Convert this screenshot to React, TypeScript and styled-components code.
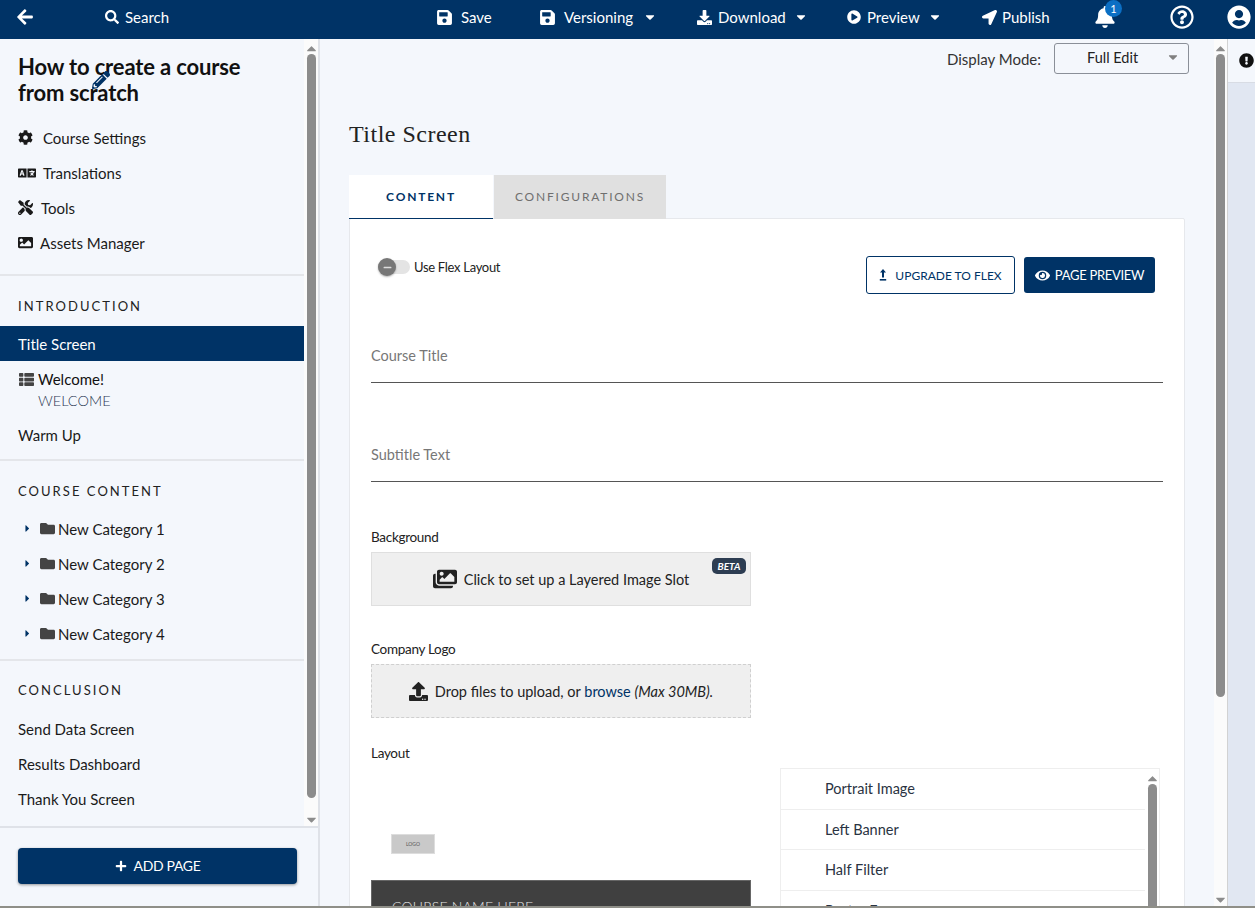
import React from "react";
import styled, { createGlobalStyle } from "styled-components";
import {
  FaArrowLeft, FaSearch, FaSave, FaCaretDown, FaDownload, FaPlayCircle, FaLocationArrow, FaBell,
  FaRegQuestionCircle, FaUserCircle, FaExclamationCircle, FaCog, FaLanguage, FaTools, FaImage,
  FaPencilAlt, FaThList, FaFolder, FaCaretRight, FaPlus, FaEye, FaImages, FaUpload, FaMinus,
  FaCaretUp,
} from "react-icons/fa";

const navy = "#003366";

const Global = createGlobalStyle`
  html, body { margin: 0; padding: 0; height: 100%; overflow: hidden; background: #f4f7fc; }
  body { font-family: Lato, "Liberation Sans", sans-serif; color: #1a1a1a; }
  * { box-sizing: border-box; }
`;

const Page = styled.div`
  width: 1255px; height: 908px; display: flex; flex-direction: column; overflow: hidden;
`;
const TopBar = styled.header`
  height: 39px; flex: none; background: ${navy}; color: #fff; display: flex; align-items: center;
  position: relative; font-size: 15px; padding-bottom: 5px;
`;
const BarItem = styled.div<{ $w: number; $gap?: number }>`
  flex: none; width: ${(p) => p.$w}px; display: flex; align-items: center; gap: ${(p) => p.$gap ?? 8}px;
  svg { flex: none; }
`;
const Caret = styled(FaCaretDown)`
  margin-left: 2px;
`;
const BellWrap = styled.div`
  position: relative; width: 76px; flex: none; height: 24px; display: flex; align-items: center;
`;
const Badge = styled.span`
  position: absolute; left: 11px; top: -5px; width: 17px; height: 17px; border-radius: 50%;
  background: #0b6fc4; color: #fff; font-size: 11px; display: flex; align-items: center; justify-content: center;
`;
const Body = styled.div`
  flex: 1; min-height: 0; display: flex;
`;
const BottomLine = styled.div`
  height: 2px; flex: none; background: #8f8f88;
`;
const Sidebar = styled.aside`
  width: 320px; flex: none; display: flex; flex-direction: column; border-right: 2px solid #dfe2e8;
`;
const SideScroll = styled.div`
  height: 787px; flex: none; display: flex; overflow: hidden;
`;
const SideContent = styled.div`
  width: 304px; flex: none; height: 100%; overflow: hidden;
`;
const Track = styled.div<{ $w: number; $pad: number }>`
  width: ${(p) => p.$w}px; flex: none; height: 100%; display: flex; flex-direction: column; align-items: center;
  color: #8c8c8c; background: #fbfbfb; padding: 3px 0 0; font-size: 15px;
`;
const Arrow = styled.div`
  height: 12px; flex: none; display: flex; align-items: center; justify-content: center; overflow: hidden;
`;
const Thumb = styled.div<{ $h: number; $gapTop: number }>`
  width: 9px; height: ${(p) => p.$h}px; flex: none; margin-top: ${(p) => p.$gapTop}px; margin-bottom: auto;
  background: #8c8c8c; border-radius: 5px;
`;
const CourseHead = styled.div`
  position: relative; padding: 15px 18px 0 18px;
`;
const CourseTitle = styled.h1`
  margin: 0; font-size: 22px; line-height: 26px; font-weight: 700; color: #111; letter-spacing: -0.15px;
`;
const Pencil = styled(FaPencilAlt)`
  position: absolute; left: 92px; top: 32px; color: ${navy}; width: 18px; height: 18px;
`;
const ToolList = styled.nav`
  padding: 14px 0 14px; border-bottom: 2px solid #e4e6ea;
`;
const ToolRow = styled.div<{ $gap: number }>`
  height: 35px; padding-left: 18px; display: flex; align-items: center; gap: ${(p) => p.$gap}px; font-size: 15px; color: #1a1a1a;
`;
const Section = styled.section<{ $last?: boolean }>`
  border-bottom: ${(p) => (p.$last ? "none" : "2px solid #e4e6ea")};
`;
const SectionTitle = styled.div<{ $top: number; $bottom: number }>`
  padding: ${(p) => p.$top}px 18px ${(p) => p.$bottom}px; font-size: 13px; line-height: 16px; letter-spacing: 2.05px; color: #222;
`;
const PageRow = styled.div<{ $active?: boolean }>`
  height: 35px; padding-left: 18px; display: flex; align-items: center; font-size: 15px;
  background: ${(p) => (p.$active ? navy : "transparent")}; color: ${(p) => (p.$active ? "#fff" : "#1a1a1a")};
`;
const WelcomeBlock = styled.div`
  padding: 8px 0 6px 19px; font-size: 15px; line-height: 21px;
`;
const WelcomeLine = styled.div`
  display: flex; align-items: center; gap: 4px; color: #111;
  svg { color: #444; }
`;
const WelcomeSub = styled.div`
  padding-left: 19px; font-weight: 300; color: #2d3a55; font-size: 14.5px;
`;
const CategoryRow = styled.div`
  height: 35px; padding-left: 22px; display: flex; align-items: center; font-size: 15px; color: #1a1a1a;
  svg:first-child { color: ${navy}; margin-right: 7px; }
  svg:nth-child(2) { color: #444; margin-right: 3px; }
`;
const SideFoot = styled.div`
  flex: 1; border-top: 2px solid #dfe2e8; padding: 20px 21px 0 18px;
`;
const AddButton = styled.button`
  width: 279px; height: 36px; border: none; border-radius: 4px; background: ${navy}; color: #fff;
  font: 14px Lato, sans-serif; letter-spacing: -0.35px; display: flex; align-items: center; justify-content: center; gap: 7px;
  box-shadow: 0 1px 3px rgba(0, 0, 0, 0.4); padding: 0 0 1px;
`;
const MainWrap = styled.main`
  width: 907px; flex: none; display: flex;
`;
const MainScroll = styled.div`
  width: 894px; flex: none; height: 100%; overflow: hidden; padding: 0 29px;
`;
const ModeRow = styled.div`
  display: flex; justify-content: flex-end; align-items: center; gap: 13px; padding: 4px 0 0; margin-right: -4px;
  font-size: 15px; color: #333;
`;
const ModeSelect = styled.div`
  width: 135px; height: 31px; border: 1px solid #8a8f98; border-radius: 3px; display: flex; align-items: center;
  justify-content: space-between; padding: 0 8px 3px 32px; color: #222; font-size: 14.5px;
  svg { color: #808080; }
`;
const Heading = styled.h2`
  margin: 44px 0 0; height: 57px; font: 400 24px/32px "Liberation Serif", "DejaVu Serif", serif; color: #222; letter-spacing: 0.5px;
`;
const Tabs = styled.div`
  display: flex; height: 44px;
`;
const Tab = styled.div<{ $active?: boolean }>`
  width: ${(p) => (p.$active ? 144 : 172)}px; display: flex; align-items: center; justify-content: center;
  font-size: 12px; letter-spacing: 1.8px; font-weight: ${(p) => (p.$active ? 700 : 400)};
  background: ${(p) => (p.$active ? "#fff" : "#e0e0e0")}; color: ${(p) => (p.$active ? navy : "#6f6f6f")};
  border-bottom: ${(p) => (p.$active ? `1px solid ${navy}` : "1px solid #e0e0e0")};
  margin-right: ${(p) => (p.$active ? 1 : 0)}px;
`;
const Card = styled.div`
  width: 836px; background: #fff; border: 1px solid #e6e8ec; border-radius: 2px; margin-top: -1px; padding: 0 21px; height: 700px;
`;
const ActionRow = styled.div`
  display: flex; align-items: flex-start; justify-content: space-between; padding: 37px 8px 0 7px; height: 75px;
`;
const ToggleWrap = styled.div`
  display: flex; align-items: center; gap: 4px; font-size: 13px; letter-spacing: -0.3px; color: #222; margin-top: 3px;
`;
const Toggle = styled.div`
  position: relative; width: 32px; height: 14px; border-radius: 7px; background: #e4e4e4;
`;
const Knob = styled.div`
  position: absolute; left: 0; top: -2px; width: 18px; height: 18px; border-radius: 50%; background: #777; color: #ddd;
  display: flex; align-items: center; justify-content: center; box-shadow: 0 1px 2px rgba(0, 0, 0, 0.3);
`;
const Actions = styled.div`
  display: flex; gap: 9px;
`;
const OutlineBtn = styled.button`
  width: 149px; height: 38px; border: 1px solid ${navy}; background: #fff; color: ${navy}; border-radius: 3px;
  font: 12px Lato, sans-serif; display: flex; align-items: center; justify-content: center; gap: 8px; padding: 0;
`;
const SolidBtn = styled.button`
  width: 131px; height: 36px; margin-top: 1px; border: none; background: ${navy}; color: #fff; border-radius: 3px;
  font: 13px Lato, sans-serif; letter-spacing: -0.3px; display: flex; align-items: center; justify-content: center; gap: 5px; padding: 0;
`;
const Field = styled.div<{ $top: number }>`
  margin-top: ${(p) => p.$top}px; height: 37px; border-bottom: 1px solid #555; font-size: 14.5px; color: #777; padding-top: 0; line-height: 20px;
`;
const Label = styled.div<{ $top: number }>`
  margin-top: ${(p) => p.$top}px; font-size: 13.5px; letter-spacing: -0.3px; line-height: 18px; color: #222;
`;
const Slot = styled.div<{ $dashed?: boolean }>`
  position: relative; width: 380px; height: 54px; margin-top: 6px; background: #efefef;
  border: 1px ${(p) => (p.$dashed ? "dashed #cfcfcf" : "solid #dfdfdf")};
  display: flex; align-items: center; justify-content: center; gap: 7px; font-size: 14.5px; color: #222;
`;
const BetaBadge = styled.span`
  position: absolute; right: 4px; top: 5px; width: 34px; height: 16px; background: #2d3d52; border-radius: 5px;
  color: #fff; font-size: 10px; font-style: italic; font-weight: 700; display: flex; align-items: center; justify-content: center;
`;
const Browse = styled.span`
  color: ${navy};
`;
const Italic = styled.em`
  color: #222;
`;
const LayoutRow = styled.div`
  display: flex; gap: 29px; margin-top: 6px;
`;
const Preview = styled.div`
  width: 380px; flex: none; padding-top: 66px;
`;
const LogoBox = styled.div`
  margin-left: 20px; width: 44px; height: 20px; background: #c9c9c9; border: 1px solid #ddd; color: #555;
  font-size: 5px; display: flex; align-items: center; justify-content: center;
`;
const DarkBand = styled.div`
  margin-top: 26px; height: 100px; background: #404040; border: 1px solid #666; border-bottom: none; color: #e8e8e8;
  font-size: 14px; padding: 17px 20px; letter-spacing: 0.2px; font-weight: 300;
`;
const ListBox = styled.div`
  width: 380px; flex: none; height: 300px; border: 1px solid #eeeeee; display: flex; margin-top: 0;
`;
const ListItems = styled.div`
  width: 364px; flex: none;
`;
const ListItem = styled.div`
  height: 40.5px; padding-left: 44px; display: flex; align-items: center; border-bottom: 1px solid #eeeeee; font-size: 14.5px; color: #2a3342;
`;
const ListTrack = styled.div`
  flex: 1; display: flex; flex-direction: column; align-items: center; color: #8c8c8c; font-size: 15px; padding-top: 3px;
`;
const RightPanel = styled.aside`
  flex: 1; background: #e1e7f2; border-left: 1px solid #d2d2d2;
`;
const RightTop = styled.div`
  height: 44px; background: #f4f7fc; border-bottom: 1px solid #d8dce4; display: flex; align-items: center; justify-content: center; padding: 0 0 1px 9px;
  padding-left: 10px;
  svg { color: #111; }
`;

function UpgradeIcon() {
  return (
    <svg width="8" height="12" viewBox="0 0 8 12" fill={navy}>
      <path d="M4 0 7 3.4H5V8.6H3V3.4H1Z" />
      <rect x="0.8" y="10" width="6.4" height="1.6" />
    </svg>
  );
}

export default function App() {
  return (
    <Page>
      <Global />
      <TopBar>
        <BarItem $w={105} style={{ paddingLeft: 16 }}><FaArrowLeft size={18} /></BarItem>
        <BarItem $w={331} $gap={6}><FaSearch size={14} />Search</BarItem>
        <BarItem $w={103} $gap={8}><FaSave size={17} />Save</BarItem>
        <BarItem $w={158} $gap={8}><FaSave size={17} />Versioning <Caret size={14} /></BarItem>
        <BarItem $w={150} $gap={6}><FaDownload size={15} />Download <Caret size={14} /></BarItem>
        <BarItem $w={135} $gap={6}><FaPlayCircle size={14} />Preview <Caret size={14} /></BarItem>
        <BarItem $w={112} $gap={5}><FaLocationArrow size={15} />Publish</BarItem>
        <BellWrap><FaBell size={22} /><Badge>1</Badge></BellWrap>
        <BarItem $w={57}><FaRegQuestionCircle size={24} /></BarItem>
        <BarItem $w={24}><FaUserCircle size={24} /></BarItem>
      </TopBar>
      <Body>
        <Sidebar>
          <SideScroll>
            <SideContent>
              <CourseHead>
                <CourseTitle>How to create a course from scratch</CourseTitle>
                <Pencil />
              </CourseHead>
              <ToolList>
                <ToolRow $gap={10}><FaCog size={15} />Course Settings</ToolRow>
                <ToolRow $gap={7}><FaLanguage size={18} />Translations</ToolRow>
                <ToolRow $gap={8}><FaTools size={15} />Tools</ToolRow>
                <ToolRow $gap={7}><FaImage size={15} />Assets Manager</ToolRow>
              </ToolList>
              <Section>
                <SectionTitle $top={22} $bottom={12}>INTRODUCTION</SectionTitle>
                <PageRow $active>Title Screen</PageRow>
                <WelcomeBlock>
                  <WelcomeLine><FaThList size={15} />Welcome!</WelcomeLine>
                  <WelcomeSub>WELCOME</WelcomeSub>
                </WelcomeBlock>
                <PageRow>Warm Up</PageRow>
                <div style={{ height: 7 }} />
              </Section>
              <Section>
                <SectionTitle $top={22} $bottom={12}>COURSE CONTENT</SectionTitle>
                {[1, 2, 3, 4].map((n) => (
                  <CategoryRow key={n}>
                    <FaCaretRight size={11} />
                    <FaFolder size={15} />
                    New Category {n}
                  </CategoryRow>
                ))}
                <div style={{ height: 8 }} />
              </Section>
              <Section $last>
                <SectionTitle $top={21} $bottom={13}>CONCLUSION</SectionTitle>
                <PageRow>Send Data Screen</PageRow>
                <PageRow>Results Dashboard</PageRow>
                <PageRow>Thank You Screen</PageRow>
              </Section>
            </SideContent>
            <Track $w={14} $pad={3}>
              <Arrow><FaCaretUp /></Arrow>
              <Thumb $h={744} $gapTop={0} />
              <Arrow style={{ marginBottom: 1 }}><FaCaretDown /></Arrow>
            </Track>
          </SideScroll>
          <SideFoot>
            <AddButton><FaPlus size={12} />ADD PAGE</AddButton>
          </SideFoot>
        </Sidebar>
        <MainWrap>
          <MainScroll>
            <ModeRow>
              Display Mode:
              <ModeSelect>Full Edit <FaCaretDown size={14} /></ModeSelect>
            </ModeRow>
            <Heading>Title Screen</Heading>
            <Tabs>
              <Tab $active>CONTENT</Tab>
              <Tab>CONFIGURATIONS</Tab>
            </Tabs>
            <Card>
              <ActionRow>
                <ToggleWrap>
                  <Toggle><Knob><FaMinus size={9} /></Knob></Toggle>
                  Use Flex Layout
                </ToggleWrap>
                <Actions>
                  <OutlineBtn><UpgradeIcon />UPGRADE TO FLEX</OutlineBtn>
                  <SolidBtn><FaEye size={15} />PAGE PREVIEW</SolidBtn>
                </Actions>
              </ActionRow>
              <Field $top={52}>Course Title</Field>
              <Field $top={62}>Subtitle Text</Field>
              <Label $top={46}>Background</Label>
              <Slot>
                <FaImages size={24} color="#222" />
                Click to set up a Layered Image Slot
                <BetaBadge>BETA</BetaBadge>
              </Slot>
              <Label $top={34}>Company Logo</Label>
              <Slot $dashed>
                <FaUpload size={19} color="#222" />
                <span>Drop files to upload, or <Browse>browse</Browse> <Italic>(Max 30MB).</Italic></span>
              </Slot>
              <Label $top={26}>Layout</Label>
              <LayoutRow>
                <Preview>
                  <LogoBox>LOGO</LogoBox>
                  <DarkBand>COURSE NAME HERE</DarkBand>
                </Preview>
                <ListBox>
                  <ListItems>
                    <ListItem>Portrait Image</ListItem>
                    <ListItem>Left Banner</ListItem>
                    <ListItem>Half Filter</ListItem>
                    <ListItem>Poster Frame</ListItem>
                  </ListItems>
                  <ListTrack>
                    <Arrow><FaCaretUp /></Arrow>
                    <Thumb $h={200} $gapTop={0} />
                  </ListTrack>
                </ListBox>
              </LayoutRow>
            </Card>
          </MainScroll>
          <Track $w={13} $pad={3}>
            <Arrow><FaCaretUp /></Arrow>
            <Thumb $h={643} $gapTop={0} />
            <Arrow style={{ marginBottom: 1 }}><FaCaretDown /></Arrow>
          </Track>
        </MainWrap>
        <RightPanel>
          <RightTop><FaExclamationCircle size={15} /></RightTop>
        </RightPanel>
      </Body>
      <BottomLine />
    </Page>
  );
}
